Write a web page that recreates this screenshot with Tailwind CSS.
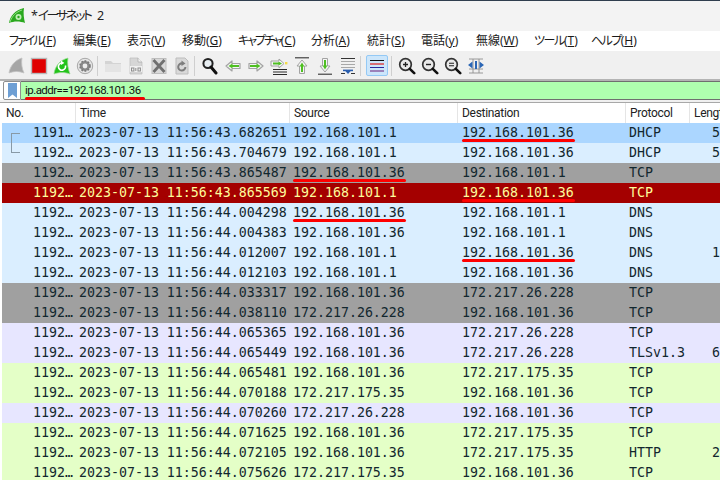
<!DOCTYPE html>
<html lang="ja">
<head>
<meta charset="UTF-8">
<title>*イーサネット 2</title>
<script src="https://cdn.jsdelivr.net/npm/@tailwindcss/browser@4"></script>
</head>
<body class="w-[720px] h-[480px] overflow-hidden bg-white text-[#111] font-['Noto_Sans','Noto_Sans_CJK_JP',sans-serif] [font-feature-settings:'palt']">
  <div class="h-px bg-[#2f3e4e]"></div>
  <!-- title bar -->
  <div class="h-[30px] bg-[#f3f3f3] flex items-center pl-[9px] gap-[6px]">
    <svg width="16" height="16" viewBox="0 0 16 16"><path d="M0 15 C1 8 6 2 15 0 C14 5 15 11 16 15 C11 13 5 13 0 15Z" fill="#2aa81e"/><path d="M1 14 C3 8 7 4 13 2" stroke="#8ee07f" fill="none"/><circle cx="9.5" cy="9" r="3" fill="#bfeeb5"/><circle cx="9.5" cy="9" r="1.2" fill="#2aa81e"/></svg>
    <span class="text-[12.5px] text-[#222] whitespace-pre">*<span class="tracking-[-2.3px]">イーサネット</span>  2</span>
  </div>
  <!-- menu -->
  <div class="h-[21px] flex items-center bg-white text-[12px] leading-none whitespace-nowrap text-[#1a1a1a] border-b border-[#f0f0f0] [&>span]:shrink-0">
    <span class="ml-[9px] w-[64px]"><span class="tracking-[-2px]">ファイル</span>(<u>F</u>)</span>
    <span class="w-[54px]">編集(<u>E</u>)</span>
    <span class="w-[55px]">表示(<u>V</u>)</span>
    <span class="w-[56px]">移動(<u>G</u>)</span>
    <span class="w-[73px]"><span class="tracking-[-2px]">キャプチャ</span>(<u>C</u>)</span>
    <span class="w-[56px]">分析(<u>A</u>)</span>
    <span class="w-[54px]">統計(<u>S</u>)</span>
    <span class="w-[55px]">電話(<u>y</u>)</span>
    <span class="w-[58px]">無線(<u>W</u>)</span>
    <span class="w-[57px]"><span class="tracking-[-1.4px]">ツール</span>(<u>T</u>)</span>
    <span><span class="tracking-[-1.6px]">ヘルプ</span>(<u>H</u>)</span>
  </div>
  <!-- toolbar -->
  <div class="h-[29px] bg-[#f0f0f0] flex items-center pl-[4px] border-b-2 border-[#b4b4b4]">
    <span class="w-[23px] flex justify-center"><svg width="18" height="18" viewBox="0 0 18 18"><path d="M2 16 C3 9 8 3 15 1 C14 6 15 12 17 16 C12 14 7 14 2 16Z" fill="#a6a6a6" stroke="#c4c4c4" stroke-width=".8"/></svg></span>
    <span class="w-[23px] flex justify-center"><svg width="18" height="18" viewBox="0 0 18 18"><rect x="1.5" y="1.5" width="15" height="15" fill="#e00000" stroke="#b9b9b9" stroke-width="1.4"/></svg></span>
    <span class="w-[23px] flex justify-center"><svg width="18" height="18" viewBox="0 0 18 18"><path d="M1 17 C2 9 7 3 15 1 C14 6 15 12 17 17 C12 15 6 15 1 17Z" fill="#22c31a" stroke="#9ad892" stroke-width=".7"/><path d="M12.4 8.5 A3.6 3.6 0 1 1 9 6" stroke="#fff" stroke-width="1.6" fill="none"/><path d="M8 3.5 L11.4 6 L8 8Z" fill="#fff"/></svg></span>
    <span class="w-[23px] flex justify-center"><svg width="18" height="18" viewBox="0 0 18 18"><circle cx="9" cy="9" r="7.7" fill="#e6e6e6" stroke="#a8a8a8"/><circle cx="9" cy="9" r="5" fill="#8a8a8a"/><circle cx="9" cy="9" r="5" fill="none" stroke="#7a7a7a" stroke-dasharray="1.8 1.4" stroke-width="1.6"/><circle cx="9" cy="9" r="2.4" fill="#eee"/></svg></span>
    <span class="w-[5px] h-[20px] border-l border-[#cfcfcf] ml-px -mr-px"></span>
    <span class="w-[23px] flex justify-center"><svg width="18" height="18" viewBox="0 0 18 18"><path d="M1 4 H7 L9 6 H17 V15 H1Z" fill="#d4d4d4"/><path d="M1 7 H17 V15 H1Z" fill="#e4e4e4"/></svg></span>
    <span class="w-[23px] flex justify-center"><svg width="18" height="18" viewBox="0 0 18 18"><path d="M3 1 H11 L15 5 V17 H3Z" fill="#d6d6d6" stroke="#bbb" stroke-width=".7"/><path d="M11 1 V5 H15" fill="#f2f2f2" stroke="#aaa" stroke-width=".7"/><rect x="3" y="9" width="12" height="6" fill="#f0f0f0"/><rect x="4.5" y="11" width="2.4" height="3" fill="none" stroke="#8c8c8c"/><rect x="8.3" y="11" width="1" height="3" fill="#8c8c8c"/><rect x="11" y="11" width="2.4" height="3" fill="none" stroke="#8c8c8c"/></svg></span>
    <span class="w-[23px] flex justify-center"><svg width="18" height="18" viewBox="0 0 18 18"><rect x="2" y="1.5" width="14" height="15" fill="#d9d9d9" stroke="#bdbdbd"/><path d="M3.5 3 L14.5 15 M14.5 3 L3.5 15" stroke="#707070" stroke-width="2.8"/></svg></span>
    <span class="w-[23px] flex justify-center"><svg width="18" height="18" viewBox="0 0 18 18"><path d="M3 1 H12 L15 4 V17 H3Z" fill="#d9d9d9" stroke="#bdbdbd"/><path d="M12.4 10 A3.6 3.6 0 1 1 9.2 6.4" stroke="#7d7d7d" stroke-width="2" fill="none"/><path d="M8.5 3.5 L12.5 6.4 L8.5 9Z" fill="#7d7d7d"/></svg></span>
    <span class="w-[5px] h-[20px] border-l border-[#cfcfcf] ml-px -mr-px"></span>
    <span class="w-[23px] flex justify-center"><svg width="18" height="18" viewBox="0 0 18 18"><circle cx="7" cy="6.5" r="4.6" fill="#e8eef2" stroke="#222" stroke-width="2"/><path d="M10 10 L15 16" stroke="#111" stroke-width="3" stroke-linecap="round"/></svg></span>
    <span class="w-[23px] flex justify-center"><svg width="18" height="18" viewBox="0 0 18 18"><path d="M2 9 L8 4 V6.5 H16 V11.5 H8 V14Z" fill="#f4f4f4" stroke="#a3a3a3" stroke-width="1.2" stroke-linejoin="round"/><path d="M4.5 9 L8.5 6.6 V8 H15 V10 H8.5 V11.4Z" fill="#4fbf22"/></svg></span>
    <span class="w-[23px] flex justify-center"><svg width="18" height="18" viewBox="0 0 18 18"><path d="M16 9 L10 4 V6.5 H2 V11.5 H10 V14Z" fill="#f4f4f4" stroke="#a3a3a3" stroke-width="1.2" stroke-linejoin="round"/><path d="M13.5 9 L9.5 6.6 V8 H3 V10 H9.5 V11.4Z" fill="#4fbf22"/></svg></span>
    <span class="w-[23px] flex justify-center"><svg width="18" height="18" viewBox="0 0 18 18"><path d="M3 12.5 H17 M3 15 H17 M3 17.5 H17" stroke="#2a2a2a"/><path d="M14 6.5 L9 2 V4 H1 V9 H9 V11Z" fill="#f4f4f4" stroke="#a3a3a3" stroke-linejoin="round"/><path d="M12 6.5 L8.5 4.4 V5.6 H3 V7.4 H8.5 V8.6Z" fill="#4fbf22"/><rect x="15" y="5" width="2.4" height="2.4" fill="#f4d94a"/></svg></span>
    <span class="w-[23px] flex justify-center"><svg width="18" height="18" viewBox="0 0 18 18"><path d="M2 .8 H16" stroke="#333" stroke-width="1.1"/><path d="M9 3 L14 9 H11.5 V16.5 H6.5 V9 H4Z" fill="#f4f4f4" stroke="#a3a3a3" stroke-linejoin="round"/><path d="M9 5.5 L11.4 9.6 H10 V15 H8 V9.6 H6.6Z" fill="#4fbf22"/></svg></span>
    <span class="w-[23px] flex justify-center"><svg width="18" height="18" viewBox="0 0 18 18"><path d="M2 17.2 H16" stroke="#333" stroke-width="1.1"/><path d="M9 15 L14 9 H11.5 V1.5 H6.5 V9 H4Z" fill="#f4f4f4" stroke="#a3a3a3" stroke-linejoin="round"/><path d="M9 12.5 L11.4 8.4 H10 V3 H8 V8.4 H6.6Z" fill="#4fbf22"/></svg></span>
    <span class="w-[23px] flex justify-center"><svg width="18" height="18" viewBox="0 0 18 18"><path d="M2 1.5 H16 M2 16.5 H6 M12 16.5 H16" stroke="#333" stroke-width="1.1"/><path d="M2 4.5 H16 M2 7.5 H16 M2 10.5 H16" stroke="#a8a8a8"/><path d="M5.5 13 H12.5 L9 17Z" fill="#2b5fb0"/><rect x="4" y="12.6" width="10" height="1.6" fill="#2b5fb0"/></svg></span>
    <span class="w-[7px] h-[20px] border-l border-[#cfcfcf] ml-px -mr-px"></span>
    <span class="w-[22px] h-[21px] flex justify-center items-center bg-[#cce6fb] border border-[#94c9f5] rounded-[2px]"><svg width="16" height="14" viewBox="0 0 16 14"><path d="M1 1.5 H15" stroke="#111" stroke-width="1"/><path d="M1 5 H15" stroke="#e01b1b" stroke-width="1.2"/><path d="M1 8.5 H15" stroke="#2a2a9c" stroke-width="1"/><path d="M1 12 H15" stroke="#7b3f8f" stroke-width="1.2"/></svg></span>
    <span class="w-[6px] h-[20px] border-l border-[#cfcfcf] ml-[3px] -mr-[2px]"></span>
    <span class="w-[23px] flex justify-center"><svg width="18" height="18" viewBox="0 0 18 18"><circle cx="7.5" cy="7.5" r="5.8" fill="#e9e9e9" stroke="#333" stroke-width="1.7"/><path d="M5 7.5 H10 M7.5 5 V10" stroke="#222" stroke-width="1.3"/><path d="M11.8 11.8 L16.2 16.2" stroke="#111" stroke-width="2.6" stroke-linecap="round"/></svg></span>
    <span class="w-[23px] flex justify-center"><svg width="18" height="18" viewBox="0 0 18 18"><circle cx="7.5" cy="7.5" r="5.8" fill="#e9e9e9" stroke="#333" stroke-width="1.7"/><path d="M5 7.5 H10" stroke="#222" stroke-width="1.4"/><path d="M11.8 11.8 L16.2 16.2" stroke="#111" stroke-width="2.6" stroke-linecap="round"/></svg></span>
    <span class="w-[23px] flex justify-center"><svg width="18" height="18" viewBox="0 0 18 18"><circle cx="7.5" cy="7.5" r="5.8" fill="#e9e9e9" stroke="#333" stroke-width="1.7"/><path d="M5 6.3 H10 M5 8.7 H10" stroke="#222" stroke-width="1.1"/><path d="M11.8 11.8 L16.2 16.2" stroke="#111" stroke-width="2.6" stroke-linecap="round"/></svg></span>
    <span class="w-[23px] flex justify-center"><svg width="18" height="18" viewBox="0 0 18 18"><path d="M2 2 H16 M2 16 H16 M6 2 V16 M12 2 V16 M2 12 H16" stroke="#8f8f8f" stroke-width=".9"/><path d="M1 8 L5.5 4.5 V11.5Z M17 8 L12.5 4.5 V11.5Z" fill="#2b66b5"/><rect x="8" y="4" width="2" height="8" fill="#2b66b5"/></svg></span>
  </div>
  <!-- display filter -->
  <div class="h-[19px] flex bg-[#f0f0f0]">
    <span class="w-[21px] pl-[3px] bg-white flex"><span class="w-[18px] border border-[#8f8f8f] rounded-l-[2px] bg-white flex justify-center items-center"><svg width="11" height="15" viewBox="0 0 11 15"><path d="M1 0 H10 V15 L5.5 11.5 L1 15Z" fill="#6e9fd4"/></svg></span></span>
    <div class="flex-1 bg-[#afffaf] border-y border-[#6f6f6f] pl-[4px] font-['Roboto',sans-serif] text-[11.5px] leading-[17px] tracking-[-0.55px] text-[#111]">
      <span class="relative inline-block">ip.addr==192.168.101.36<i class="absolute left-0 w-[120px] bottom-[-1px] h-[3px] bg-[#f00000] rounded-full"></i></span>
    </div>
  </div>
  <div class="h-[3px] bg-[#f0f0f0] border-b border-[#a8a8a8]"></div>
  <!-- packet list -->
  <div class="ml-[2px] relative">
    <div class="h-[20px] flex font-['Roboto',sans-serif] text-[12px] leading-[20px] tracking-[-0.3px] text-[#222] bg-white whitespace-nowrap overflow-hidden [&>span]:shrink-0 [&>span]:pl-[4px]">
      <span class="w-[74px] border-r border-[#e5e5e5]">No.</span>
      <span class="w-[214px] border-r border-[#e5e5e5]">Time</span>
      <span class="w-[168px] border-r border-[#e5e5e5]">Source</span>
      <span class="w-[168px] border-r border-[#e5e5e5]">Destination</span>
      <span class="w-[64px] border-r border-[#e5e5e5]">Protocol</span>
      <span>Length</span>
    </div>
    <div id="rows" class="font-['DejaVu_Sans_Mono',monospace] text-[13.28px] leading-[20px]"></div>
    <!-- related packet bracket -->
    <div class="absolute left-[9px] top-[30px] w-[9px] h-[20px] border-l border-y border-[#8899a6]"></div>
  </div>
  <script>
    const LOCAL = '192.168.101.36', GW = '192.168.101.1', G1 = '172.217.26.228', G2 = '172.217.175.35';
    const styles = {
      sel: 'bg-[#abd6ff] text-[#12272e]',
      dns: 'bg-[#daeeff] text-[#12272e]',
      grey: 'bg-[#a0a0a0] text-[#12272e]',
      red: 'bg-[#a40000] text-[#fffc9c]',
      lav: 'bg-[#e7e6ff] text-[#12272e]',
      green: 'bg-[#e4ffc7] text-[#12272e]'
    };
    // no, time, source, destination, protocol, length, style, underlined column
    const packets = [
      ['1191…', '43.682651', GW, LOCAL, 'DHCP', '590', 'sel', 'dst'],
      ['1192…', '43.704679', GW, LOCAL, 'DHCP', '590', 'dns'],
      ['1192…', '43.865487', LOCAL, GW, 'TCP', '54', 'grey', 'src'],
      ['1192…', '43.865569', GW, LOCAL, 'TCP', '54', 'red', 'dst'],
      ['1192…', '44.004298', LOCAL, GW, 'DNS', '75', 'dns', 'src'],
      ['1192…', '44.004383', LOCAL, GW, 'DNS', '75', 'dns'],
      ['1192…', '44.012007', GW, LOCAL, 'DNS', '107', 'dns', 'dst'],
      ['1192…', '44.012103', GW, LOCAL, 'DNS', '91', 'dns'],
      ['1192…', '44.033317', LOCAL, G1, 'TCP', '54', 'grey'],
      ['1192…', '44.038110', G1, LOCAL, 'TCP', '54', 'grey'],
      ['1192…', '44.065365', LOCAL, G1, 'TCP', '54', 'lav'],
      ['1192…', '44.065449', LOCAL, G1, 'TLSv1.3', '621', 'lav'],
      ['1192…', '44.065481', LOCAL, G2, 'TCP', '66', 'green'],
      ['1192…', '44.070188', G2, LOCAL, 'TCP', '66', 'green'],
      ['1192…', '44.070260', G1, LOCAL, 'TCP', '54', 'lav'],
      ['1192…', '44.071625', LOCAL, G2, 'TCP', '54', 'green'],
      ['1192…', '44.072105', LOCAL, G2, 'HTTP', '245', 'green'],
      ['1192…', '44.075626', G2, LOCAL, 'TCP', '54', 'green']
    ];
    const mark = on => on
      ? '<i class="absolute left-[3px] w-[113px] bottom-px h-[3px] bg-[#ff0000] rounded-full z-10"></i>'
      : '';
    document.getElementById('rows').innerHTML = packets.map(([no, t, src, dst, proto, len, style, under]) => `
      <div class="h-[20px] flex whitespace-pre ${styles[style]}">
        <span class="w-[71px] shrink-0 text-right">${no}</span>
        <span class="w-[217px] shrink-0 pl-[6px]">2023-07-13 11:56:${t}</span>
        <span class="relative w-[169px] shrink-0 pl-[3px]">${src}${mark(under === 'src')}</span>
        <span class="relative w-[167px] shrink-0 pl-[3px]">${dst}${mark(under === 'dst')}</span>
        <span class="w-[64px] shrink-0 pl-[3px]">${proto}</span>
        <span class="w-[46px] shrink-0 text-right">${len}</span>
      </div>`).join('');
  </script>
</body>
</html>
